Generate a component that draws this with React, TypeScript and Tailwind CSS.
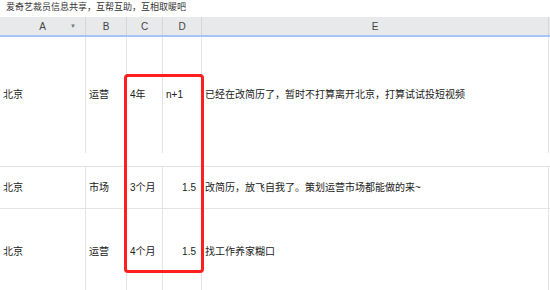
import React from 'react';

const cols = 'grid grid-cols-[86px_41px_36px_39px_347px]';

function Row({
  cells,
  className = ''
}: {
  cells: { text: string; align?: 'left' | 'right' }[];
  className?: string;
}) {
  return (
    <div className={`${cols} border-b border-[#e2e3e5] ${className}`}>
      {cells.map((c, i) => (
        <div
          key={i}
          className={`flex items-center border-r border-[#e2e3e5] whitespace-nowrap overflow-visible ${
            c.align === 'right' ? 'justify-end pr-[5px]' : 'pl-[3px]'
          }`}
        >
          {c.text}
        </div>
      ))}
    </div>
  );
}

export default function App() {
  const font = { fontFamily: '"Liberation Sans", "Noto Sans CJK SC", sans-serif' };
  return (
    <div
      className="relative w-[550px] h-[290px] overflow-hidden bg-white text-[#222]"
      style={font}
    >
      <div className="h-[17px] pl-[6px] text-[9px] leading-[15px] text-[#333]">
        爱奇艺裁员信息共享，互帮互助，互相取暖吧
      </div>

      <div className={`${cols} h-[20px] bg-[#e8e9eb] border-b-2 border-[#a6c4f6] text-[10px] text-[#444]`}>
        <div className="relative flex items-center justify-center border-r border-[#d6d7d9]">
          A
          <span className="absolute left-[70px] top-[5px] text-[6px] text-[#777]">▼</span>
        </div>
        <div className="flex items-center justify-center border-r border-[#d6d7d9]">B</div>
        <div className="flex items-center justify-center border-r border-[#d6d7d9]">C</div>
        <div className="flex items-center justify-center border-r border-[#d6d7d9]">D</div>
        <div className="flex items-center justify-center border-r border-[#d6d7d9]">E</div>
      </div>

      <div className="text-[10px] leading-[14px]">
        <Row
          className="h-[130px] pb-[13px]"
          cells={[
            { text: '北京' },
            { text: '运营' },
            { text: '4年' },
            { text: 'n+1' },
            { text: '已经在改简历了，暂时不打算离开北京，打算试试投短视频' }
          ]}
        />
        <Row
          className="h-[42px]"
          cells={[
            { text: '北京' },
            { text: '市场' },
            { text: '3个月' },
            { text: '1.5', align: 'right' },
            { text: '改简历，放飞自我了。策划运营市场都能做的来~' }
          ]}
        />
        <Row
          className="h-[86px]"
          cells={[
            { text: '北京' },
            { text: '运营' },
            { text: '4个月' },
            { text: '1.5', align: 'right' },
            { text: '找工作养家糊口' }
          ]}
        />
      </div>

      <div className="absolute left-[124px] top-[74px] w-[80px] h-[199px] border-[3px] border-[#ff1f1f] rounded-[4px]" />
    </div>
  );
}
